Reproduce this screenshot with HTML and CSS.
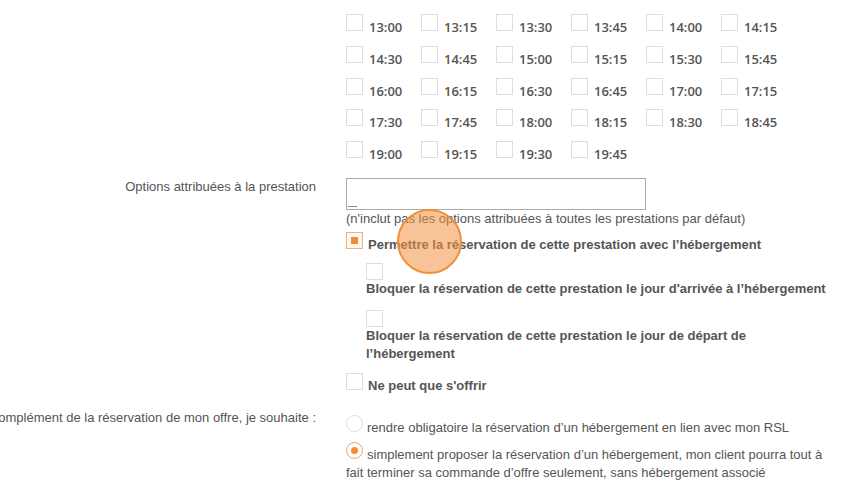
FILE: index.html
```html
<!DOCTYPE html>
<html>
<head>
  <title>Prestation</title>
  <link rel="stylesheet" href="styles.css">
</head>
<body>
  <div class="page">
    <div class="row">
      <div class="label"></div>
      <div class="field">
        <a class="toggle-all" href="#">tout cocher</a>
        <div class="times" id="times"></div>
      </div>
    </div>

    <div class="row options-row">
      <div class="label">Options attribuées à la prestation</div>
      <div class="field">
        <div class="multi"><span class="multi-cursor"></span></div>
        <div class="hint">(n'inclut pas les options attribuées à toutes les prestations par défaut)</div>

        <div class="opt first"><span class="box checked"></span><b>Permettre la réservation de cette prestation avec l’hébergement</b></div>
        <div class="sub">
          <div class="sub-opt"><span class="box"></span><b>Bloquer la réservation de cette prestation le jour d'arrivée à l’hébergement</b></div>
          <div class="sub-opt"><span class="box"></span><b>Bloquer la réservation de cette prestation le jour de départ de l’hébergement</b></div>
        </div>
        <div class="opt"><span class="box"></span><b>Ne peut que s'offrir</b></div>
      </div>
    </div>

    <div class="row radio-row">
      <div class="label">En complément de la réservation de mon offre, je souhaite :</div>
      <div class="field">
        <div class="radio-opt"><span class="radio"></span>rendre obligatoire la réservation d’un hébergement en lien avec mon RSL</div>
        <div class="radio-opt second"><span class="radio on"></span>simplement proposer la réservation d’un hébergement, mon client pourra tout à fait terminer sa commande d’offre seulement, sans hébergement associé</div>
      </div>
    </div>
  </div>

  <div class="click-dot"></div>

  <script>
    const times = document.getElementById("times");
    const slots = [];
    for (let h = 13; h <= 19; h++) {
      for (let m = 0; m < 60; m += 15) {
        if (h === 19 && m > 45) break;
        slots.push(`${h}:${m === 0 ? "00" : m}`);
      }
    }
    times.innerHTML = slots.map(t =>
      `<div class="slot"><span class="box"></span><span class="time">${t}</span></div>`
    ).join("");
  </script>
</body>
</html>
```

FILE: styles.css
```css
html, body { margin: 0; padding: 0; background: #fff; overflow: hidden; }
body { font-family: "Liberation Sans", Arial, sans-serif; font-size: 13px; line-height: 18px; color: #555; }
.page { margin-top: -16px; }
.row { display: grid; grid-template-columns: 316px 486px; column-gap: 30px; }
.label { white-space: nowrap; display: flex; justify-content: flex-end; }

.toggle-all { display: block; margin-top: 3px; margin-left: 21px; height: 16px; color: #2a6fb0; text-decoration: none; font-size: 13px; line-height: 16px; }
.times { display: grid; grid-template-columns: repeat(6, 75px); grid-auto-rows: 31.75px; margin-top: 11px; }
.slot { white-space: nowrap; }
.time { font-family: "Open Sans", sans-serif; font-weight: 600; font-size: 13px; margin-left: 6px; color: #555; position: relative; top: 1px; }

.box { display: inline-block; width: 15px; height: 15px; border: 1px solid #ddd; background: #fff; vertical-align: baseline; position: relative; }
.box.checked { border-color: #eeb37f; background: #fff8f1; }
.box.checked::after { content: ""; position: absolute; left: 4px; top: 4px; width: 7px; height: 7px; background: #f28c38; }

.options-row { margin-top: 5px; }
.multi { width: 298px; height: 30px; border: 1px solid #aaa; position: relative; }
.multi-cursor { position: absolute; left: 1px; bottom: 2px; width: 9px; border-bottom: 1px solid #888; }
.hint { line-height: 18px; }

.opt { margin-top: 10px; }
.opt.first { margin-top: 4px; }
.opt .box { margin-right: 5px; }
.opt b, .sub-opt b { font-weight: bold; }
.sub { padding-left: 20px; }
.sub-opt { margin-top: 9px; }
.sub-opt + .sub-opt { margin-top: 12px; }
.sub-opt .box { display: block; }

.radio-row { margin-top: 14px; }
.radio-row .field { padding-top: 6px; }
.radio-opt + .radio-opt { margin-top: 5px; }
.radio { display: inline-block; width: 15px; height: 15px; border: 1px solid #ddd; border-radius: 50%; margin-right: 4px; position: relative; vertical-align: baseline; }
.radio.on { border-color: #eea262; }
.radio.on::after { content: ""; position: absolute; left: 4px; top: 4px; width: 7px; height: 7px; border-radius: 50%; background: #f28c38; }

.click-dot { position: absolute; left: 397px; top: 209px; width: 61px; height: 61px; border: 2px solid #f0913a; border-radius: 50%; background: rgba(243, 146, 64, 0.55); }
```
